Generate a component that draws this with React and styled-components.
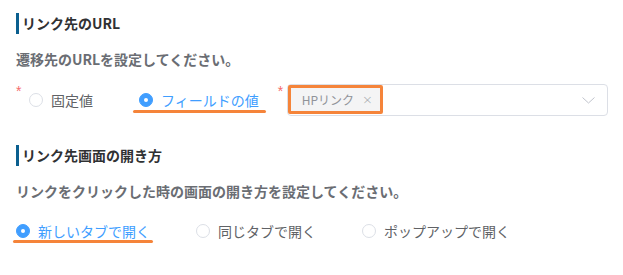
import React from "react";
import styled, { createGlobalStyle } from "styled-components";

const GlobalStyle = createGlobalStyle`
  html, body { margin: 0; padding: 0; background: #ffffff; }
  body {
    font-family: "Noto Sans CJK JP", "Noto Sans", sans-serif;
    -webkit-font-smoothing: antialiased;
  }
`;

const ORANGE = "#f5843a";

const Page = styled.div`
  width: 623px;
  height: 275px;
  box-sizing: border-box;
  padding: 13px 0 0 16px;
  display: flex;
  flex-direction: column;
`;

const Section = styled.section`
  display: flex;
  flex-direction: column;
  margin-top: ${(p) => p.$top || 0}px;
`;

const Heading = styled.h2`
  margin: 0;
  border-left: 3px solid #0b5f8f;
  padding-left: 3px;
  height: 21px;
  line-height: 21px;
  font-size: 14px;
  font-weight: 700;
  color: #303133;
`;

const Description = styled.p`
  margin: 15px 0 0 0;
  line-height: 20px;
  font-size: 14px;
  font-weight: 700;
  color: #6a6d73;
`;

const Row = styled.div`
  display: flex;
  align-items: center;
  height: 32px;
  margin-top: ${(p) => p.$top}px;
  white-space: nowrap;
`;

const Asterisk = styled.span`
  align-self: flex-start;
  width: ${(p) => p.$w}px;
  flex: none;
  font-family: "Liberation Sans", sans-serif;
  font-size: 14px;
  line-height: 14px;
  color: #f56c6c;
`;

const RadioGroup = styled.div`
  display: flex;
  flex: none;
  align-items: center;
  gap: 46px;
`;

const RadioItem = styled.label`
  position: relative;
  display: flex;
  flex: none;
  align-items: center;
  gap: 8px;
  font-size: 14px;
  line-height: 20px;
  white-space: nowrap;
  color: ${(p) => (p.$checked ? "#409eff" : "#606266")};
  cursor: pointer;
`;

const Circle = styled.span`
  width: 14px;
  height: 14px;
  box-sizing: border-box;
  border-radius: 50%;
  flex: none;
  border: 1px solid ${(p) => (p.$checked ? "#409eff" : "#dcdfe6")};
  background: ${(p) => (p.$checked ? "#409eff" : "#ffffff")};
  display: flex;
  align-items: center;
  justify-content: center;
  &::after {
    content: "";
    width: 4px;
    height: 4px;
    border-radius: 50%;
    background: #ffffff;
    display: ${(p) => (p.$checked ? "block" : "none")};
  }
`;

const Underline = styled.span`
  position: absolute;
  left: ${(p) => p.$l}px;
  right: ${(p) => p.$r}px;
  top: ${(p) => p.$t}px;
  height: 3px;
  border-radius: 2px;
  background: ${ORANGE};
`;

const FieldGroup = styled.div`
  display: flex;
  flex: none;
  align-items: center;
  margin-left: 19px;
  height: 32px;
`;

const Select = styled.div`
  width: 321px;
  height: 32px;
  flex: none;
  box-sizing: border-box;
  border: 1px solid #dcdfe6;
  border-radius: 4px;
  display: flex;
  align-items: flex-start;
  justify-content: space-between;
  padding-right: 12px;
`;

const Tag = styled.span`
  height: 29px;
  box-sizing: border-box;
  border: 3px solid ${ORANGE};
  border-radius: 2px;
  background: #f4f4f5;
  display: flex;
  align-items: center;
  gap: 8px;
  padding: 0 7px 0 11px;
  font-size: 12px;
  color: #909399;
  line-height: 20px;
`;

const Close = styled.span`
  font-family: "DejaVu Sans", sans-serif;
  font-size: 13px;
  font-weight: 300;
  color: #a0a3a9;
`;

const Chevron = styled.svg`
  align-self: center;
  width: 13px;
  height: 7px;
`;

function Radio({ checked, label, line }) {
  return (
    <RadioItem $checked={checked}>
      <Circle $checked={checked} />
      <span>{label}</span>
      {line && <Underline $l={line[0]} $r={line[1]} $t={line[2]} />}
    </RadioItem>
  );
}

export default function App() {
  return (
    <>
      <GlobalStyle />
      <Page>
        <Section>
          <Heading>リンク先のURL</Heading>
          <Description>遷移先のURLを設定してください。</Description>
          <Row $top={15}>
            <Asterisk $w={13}>*</Asterisk>
            <RadioGroup>
              <Radio label="固定値" />
              <Radio checked label="フィールドの値" line={[-6, -7, 20]} />
            </RadioGroup>
            <FieldGroup>
              <Asterisk $w={9}>*</Asterisk>
              <Select>
                <Tag>
                  HPリンク<Close>×</Close>
                </Tag>
                <Chevron viewBox="0 0 13 7">
                  <polyline
                    points="0.5,0.5 6.5,6 12.5,0.5"
                    fill="none"
                    stroke="#c0c4cc"
                    strokeWidth="1"
                  />
                </Chevron>
              </Select>
            </FieldGroup>
          </Row>
        </Section>
        <Section $top={29}>
          <Heading>リンク先画面の開き方</Heading>
          <Description>リンクをクリックした時の画面の開き方を設定してください。</Description>
          <Row $top={14}>
            <RadioGroup>
              <Radio checked label="新しいタブで開く" line={[-3, -3, 19]} />
              <Radio label="同じタブで開く" />
              <Radio label="ポップアップで開く" />
            </RadioGroup>
          </Row>
        </Section>
      </Page>
    </>
  );
}
